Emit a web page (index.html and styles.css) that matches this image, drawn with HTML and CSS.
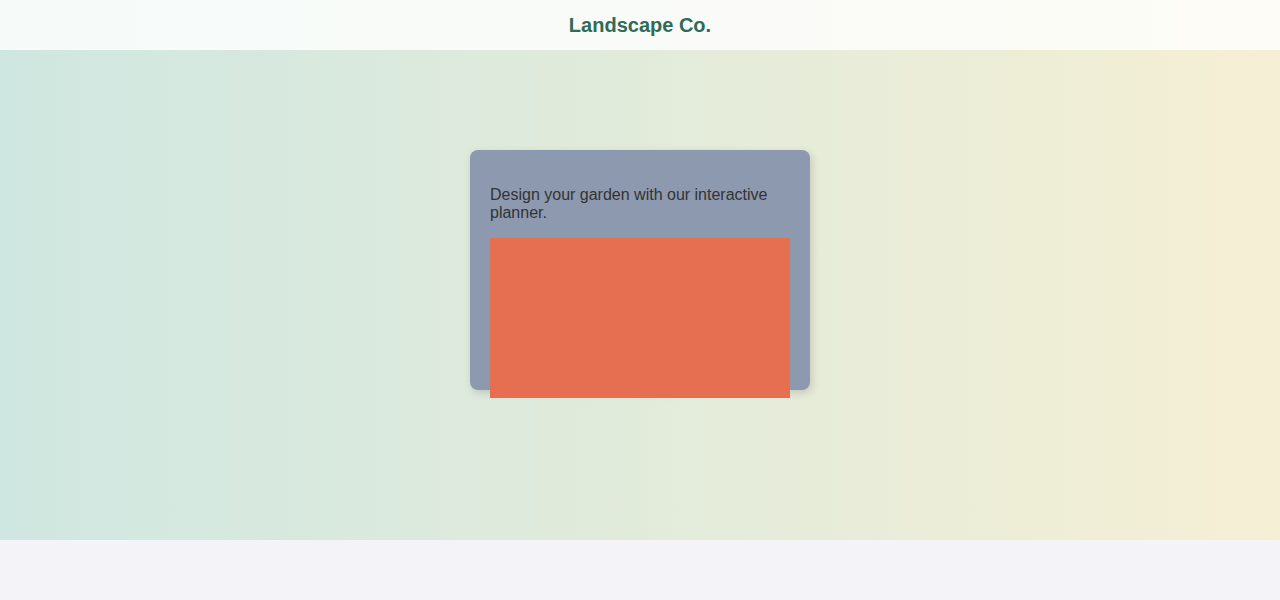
FILE: index.html
```html
<!DOCTYPE html>
<html lang="en">
<head>
<meta charset="utf-8">
<title>Landscape Co.</title>
<link rel="stylesheet" href="styles.css">
</head>
<body>
<div class="page">
  <header class="site-header">
    <h1 class="brand">Landscape Co.</h1>
  </header>
  <main class="hero">
    <section class="card">
      <p class="card-text">Design your garden with our interactive planner.</p>
      <div class="planner"></div>
    </section>
  </main>
</div>
</body>
</html>
```

FILE: styles.css
```css
html, body {
  margin: 0;
  padding: 0;
}
body {
  background: #f4f4f8;
  font-family: "Liberation Sans", Arial, sans-serif;
  height: 600px;
}
.page {
  height: 540px;
  background: linear-gradient(to right, #cfe7e1, #f5efd4);
  display: flex;
  flex-direction: column;
}
.site-header {
  height: 50px;
  background: rgba(255, 255, 255, 0.8);
  display: flex;
  align-items: center;
  justify-content: center;
}
.brand {
  margin: 0;
  font-size: 20px;
  font-weight: bold;
  color: #2f6b57;
}
.hero {
  flex: 1;
  display: flex;
  justify-content: center;
  align-items: flex-start;
  padding-top: 100px;
}
.card {
  width: 300px;
  height: 200px;
  padding: 20px;
  background: #8c99ae;
  border-radius: 8px;
  box-shadow: 2px 3px 8px rgba(0, 0, 0, 0.15);
}
.card-text {
  margin: 16px 0;
  font-size: 16px;
  line-height: 18px;
  color: #333;
}
.planner {
  width: 300px;
  height: 160px;
  background: #e66f51;
}
```
